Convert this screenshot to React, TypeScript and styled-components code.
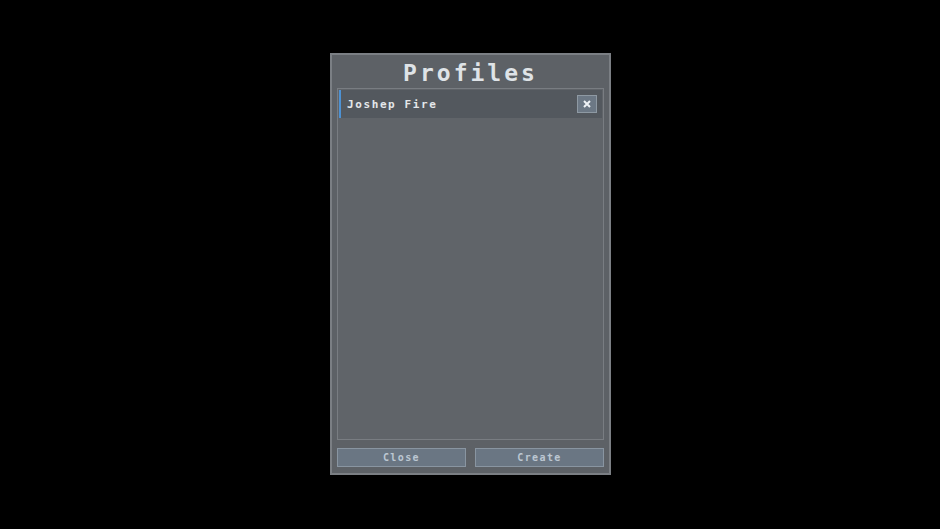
import React from "react";
import styled, { createGlobalStyle } from "styled-components";

const Global = createGlobalStyle`
  html, body { margin: 0; padding: 0; background: #000; }
  body { width: 940px; height: 529px; overflow: hidden; font-family: "DejaVu Sans Mono", "Liberation Mono", monospace; }
  #root { width: 940px; height: 529px; }
`;

const Screen = styled.div`
  width: 940px;
  height: 529px;
  display: flex;
  justify-content: center;
  align-items: flex-start;
  padding-top: 53px;
  box-sizing: border-box;
  padding-left: 1px;
`;

const Panel = styled.div`
  width: 281px;
  height: 422px;
  box-sizing: border-box;
  background: #5d6166;
  border: 2px solid #7b7f84;
  display: flex;
  flex-direction: column;
  padding: 0 5px 6px 5px;
`;

const Title = styled.h1`
  margin: 0;
  height: 33px;
  display: flex;
  align-items: center;
  justify-content: center;
  font-size: 23px;
  font-weight: bold;
  letter-spacing: 3px;
  color: #dfe3e7;
  padding-top: 2px;
  box-sizing: border-box;
`;

const List = styled.div`
  flex: 1;
  background: #606469;
  border: 1px solid #797d82;
  padding: 1px;
  display: flex;
  flex-direction: column;
`;

const Row = styled.div<{ $active?: boolean }>`
  height: 28px;
  display: flex;
  align-items: center;
  justify-content: space-between;
  background: #53585e;
  border-left: 2px solid ${(p) => (p.$active ? "#4d92d4" : "transparent")};
  padding: 0 5px 0 6px;
`;

const Name = styled.span`
  font-size: 11px;
  font-weight: bold;
  letter-spacing: 1.6px;
  color: #e4e7ea;
`;

const IconButton = styled.button`
  width: 20px;
  height: 18px;
  padding: 0;
  background: #6c7885;
  border: 1px solid #8e99a3;
  color: #eef2f6;
  font-family: inherit;
  font-size: 12px;
  font-weight: bold;
  display: flex;
  align-items: center;
  justify-content: center;
  cursor: pointer;
`;

const Footer = styled.div`
  display: grid;
  grid-template-columns: 1fr 1fr;
  gap: 9px;
  margin-top: 8px;
`;

const Button = styled.button`
  height: 19px;
  background: #6a7683;
  border: 1px solid #8995a1;
  color: #bcc7d2;
  font-family: inherit;
  font-size: 10px;
  font-weight: bold;
  letter-spacing: 1.4px;
  padding: 0;
  cursor: pointer;
`;

export default function App() {
  return (
    <>
      <Global />
      <Screen>
        <Panel>
          <Title>Profiles</Title>
          <List>
            <Row $active>
              <Name>Joshep Fire</Name>
              <IconButton aria-label="Delete">
                <svg width="8" height="8" viewBox="0 0 8 8">
                  <path d="M1 1L7 7M7 1L1 7" stroke="#eef2f6" strokeWidth="2" />
                </svg>
              </IconButton>
            </Row>
          </List>
          <Footer>
            <Button>Close</Button>
            <Button>Create</Button>
          </Footer>
        </Panel>
      </Screen>
    </>
  );
}
